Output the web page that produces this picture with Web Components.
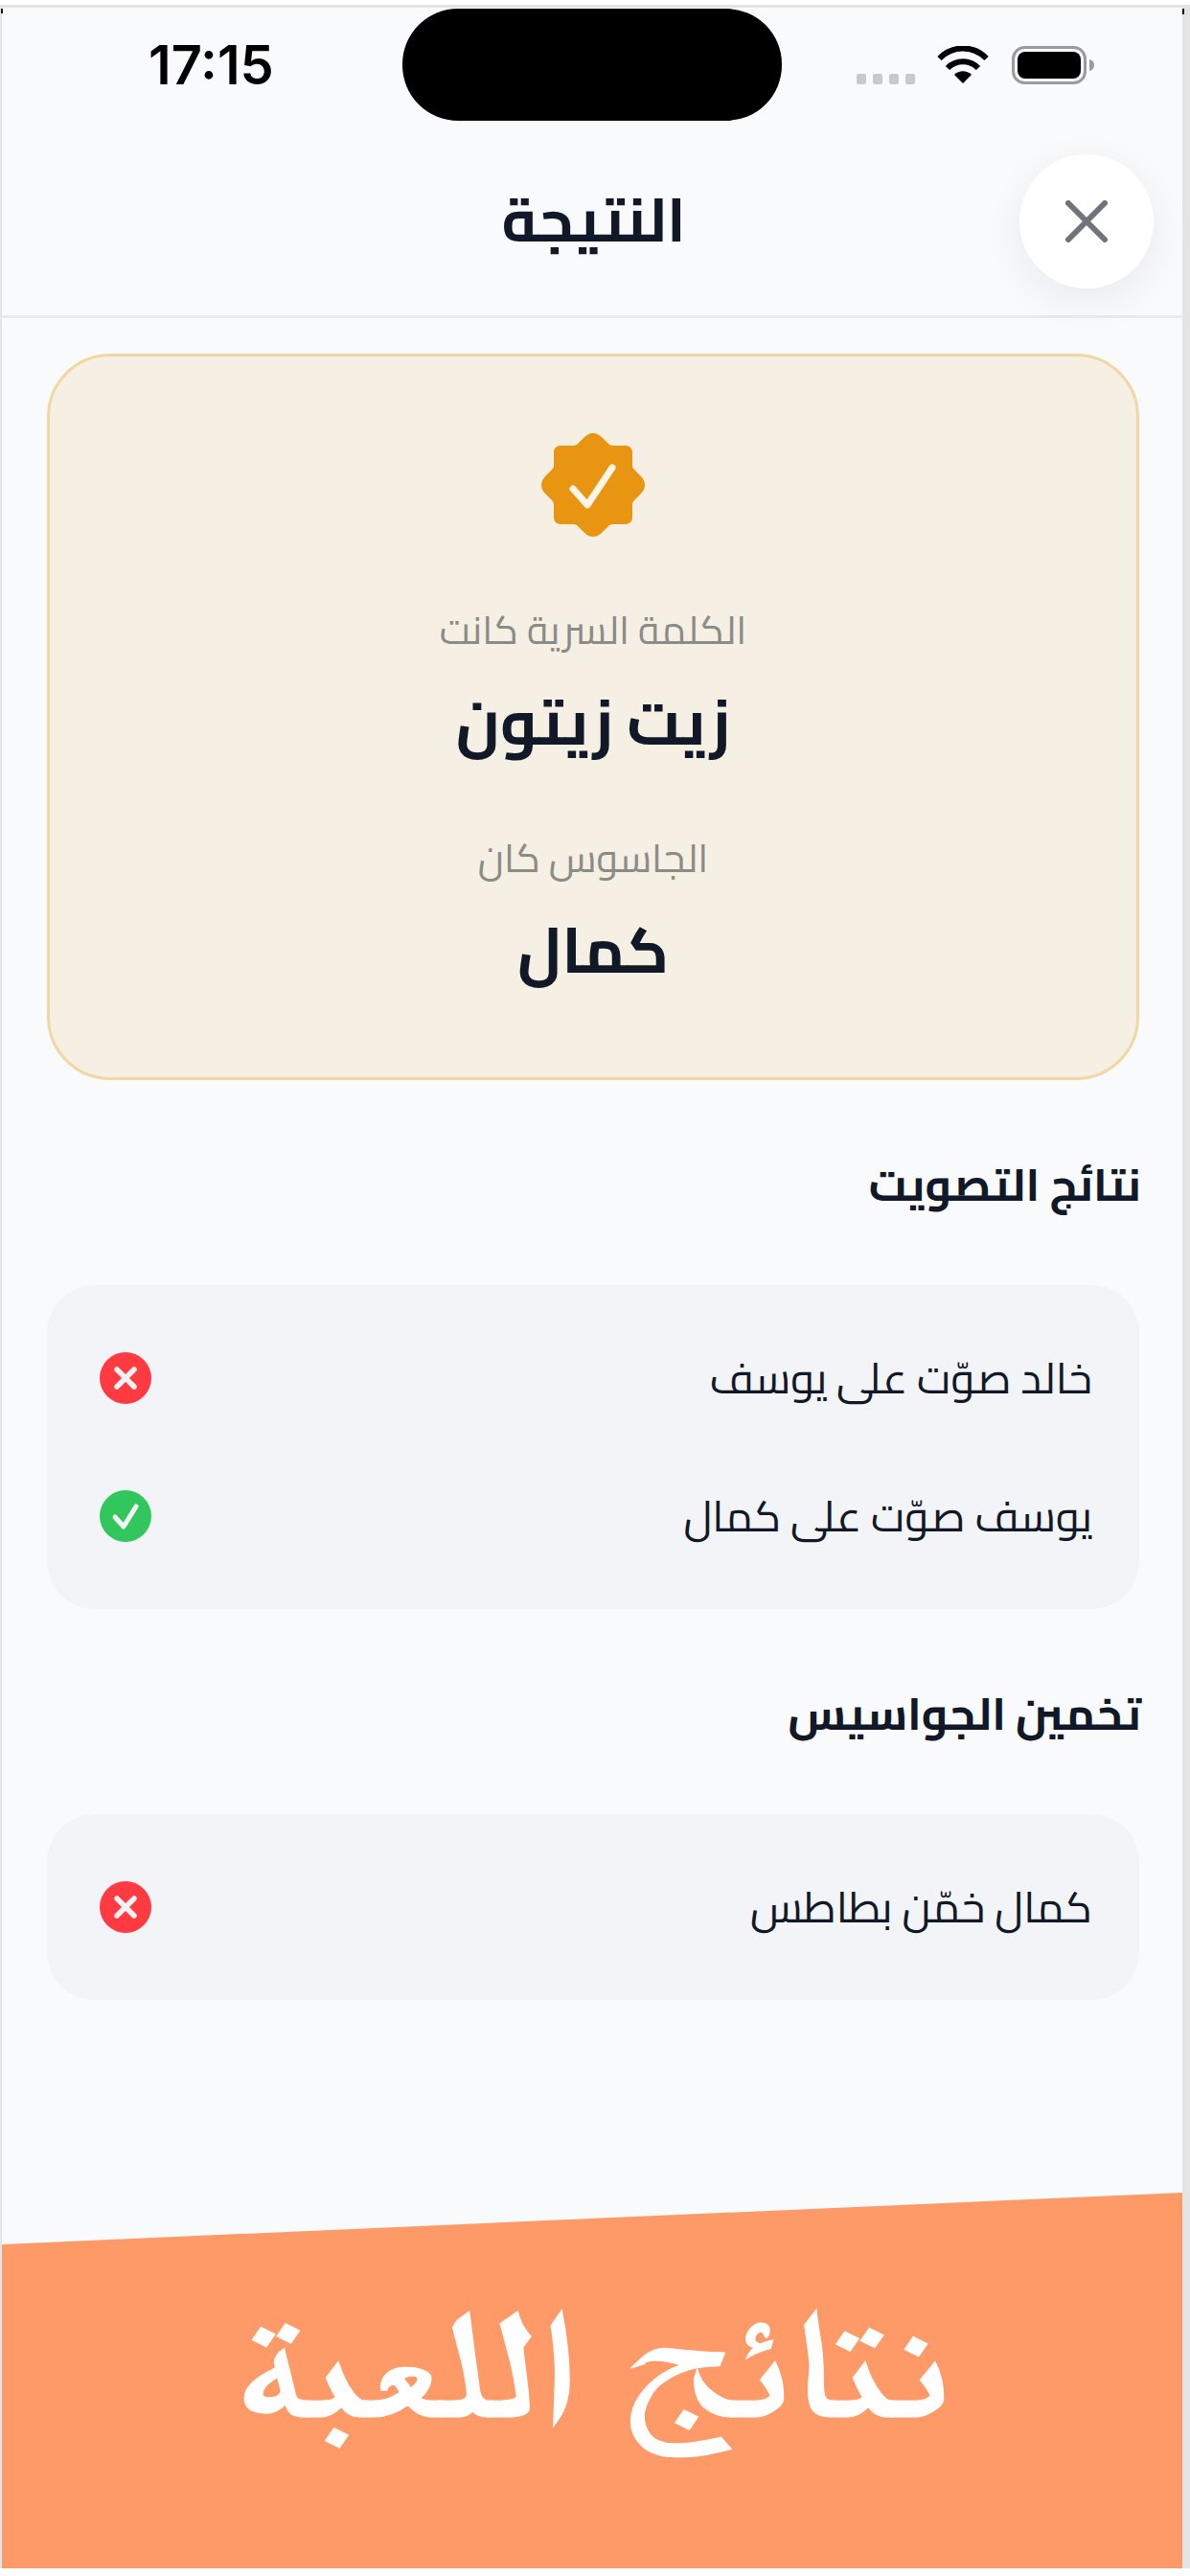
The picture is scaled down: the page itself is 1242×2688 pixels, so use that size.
<!DOCTYPE html>
<html lang="ar">
<head>
<meta charset="utf-8">
<title>النتيجة</title>
<style>
html, body { margin: 0; background: #fff; }
body { font-family: Cairo, "Noto Sans", sans-serif; color: #111827; }
</style>
</head>
<body>
<phone-frame>
    <status-bar time="17:15"></status-bar>
    <nav-header title="النتيجة"></nav-header>
    <results-view>
        <reveal-card>
            <reveal-item label="الكلمة السرية كانت" value="زيت زيتون"></reveal-item>
            <reveal-item label="الجاسوس كان" value="كمال"></reveal-item>
        </reveal-card>
        <result-section heading="نتائج التصويت">
            <result-row status="bad">خالد صوّت على يوسف</result-row>
            <result-row status="ok">يوسف صوّت على كمال</result-row>
        </result-section>
        <result-section heading="تخمين الجواسيس">
            <result-row status="bad">كمال خمّن بطاطس</result-row>
        </result-section>
    </results-view>
    <promo-banner>نتائج اللعبة</promo-banner>
</phone-frame>

<script>
const frameTemplate = document.createElement('template');
frameTemplate.innerHTML = `
<style>
:host {
    display: flex;
    flex-direction: column;
    box-sizing: border-box;
    position: relative;
    width: 1242px;
    height: 2675px;
    margin-top: 5px;
    border-top: 3px solid #e4e4e4;
    border-left: 2px solid #e2e5e9;
    border-right: 8px solid #e4e4e4;
    background: #f9fafc;
}
i {
    position: absolute;
    top: 1px;
    width: 2px;
    height: 5px;
    background: #111;
}
i.l { left: -1px; }
i.r { right: -2px; height: 6px; }
</style>
<i class="l"></i><i class="r"></i>
<slot></slot>
`;

class PhoneFrame extends HTMLElement {
    constructor() {
        super();
        this.attachShadow({mode: 'open'})
            .appendChild(frameTemplate.content.cloneNode(true));
    }
}

const statusTemplate = document.createElement('template');
statusTemplate.innerHTML = `
<style>
:host {
    display: grid;
    grid-template-columns: 418px 396px 1fr;
    align-items: center;
    height: 122px;
    box-sizing: border-box;
    padding: 1px 0 4px;
    direction: ltr;
}
.time {
    padding-left: 153px;
    font: 600 56px/1 Inter, "Liberation Sans", sans-serif;
    color: #000;
}
.island {
    height: 117px;
    border-radius: 58px;
    background: #000;
}
.icons {
    display: flex;
    align-items: center;
    padding-left: 78px;
}
.dots {
    display: flex;
    gap: 7px;
    align-self: flex-end;
    margin-right: 23px;
}
.dots b {
    width: 10px;
    height: 11px;
    border-radius: 2px;
    background: #c9c9c9;
}
svg { display: block; }
.wifi { margin-right: 24px; }
</style>
<div class="time"></div>
<div class="island"></div>
<div class="icons">
    <div class="dots"><b></b><b></b><b></b><b></b></div>
    <svg class="wifi" width="54" height="39" viewBox="0 0 54 39">
        <path d="M2.500 13C16-1 38-1 51.500 13M11 23C20 14 34 14 43 23" fill="none" stroke="#000" stroke-width="6"/>
        <path d="M18 30C23 25 31 25 36 30L27 39Z" fill="#000"/>
    </svg>
    <svg width="87" height="40" viewBox="0 0 87 40">
        <rect x="1.500" y="1.500" width="75" height="37" rx="12" fill="none" stroke="#9b9b9b" stroke-width="3"/>
        <rect x="6" y="6" width="66" height="28" rx="8" fill="#000"/>
        <path d="M81 14c3 .5 5 3 5 6s-2 5.500-5 6z" fill="#9b9b9b"/>
    </svg>
</div>
`;

class StatusBar extends HTMLElement {
    constructor() {
        super();
        this.attachShadow({mode: 'open'})
            .appendChild(statusTemplate.content.cloneNode(true));
    }

    connectedCallback() {
        this.shadowRoot.querySelector('.time').textContent = this.getAttribute('time');
    }
}

const navTemplate = document.createElement('template');
navTemplate.innerHTML = `
<style>
:host {
    display: grid;
    grid-template-columns: 170px 1fr 170px;
    align-items: center;
    height: 202px;
    box-sizing: border-box;
    border-bottom: 3px solid #e9eaed;
    direction: ltr;
}
h1 {
    grid-column: 2;
    margin: 0;
    padding-left: 3px;
    text-align: center;
    font: 700 63px/1.5 Cairo, sans-serif;
    color: #111827;
    direction: rtl;
}
button {
    grid-column: 3;
    justify-self: start;
    display: grid;
    place-items: center;
    width: 140px;
    height: 140px;
    margin-top: 3px;
    padding: 0;
    border: 0;
    border-radius: 50%;
    background: #fff;
    box-shadow: 0 12px 40px rgba(17, 24, 39, .07);
}
svg { display: block; }
</style>
<h1></h1>
<button aria-label="إغلاق">
    <svg width="44" height="44" viewBox="0 0 44 44">
        <path d="M3 3L41 41M41 3L3 41" fill="none" stroke="#6f737a" stroke-width="6" stroke-linecap="round"/>
    </svg>
</button>
`;

class NavHeader extends HTMLElement {
    constructor() {
        super();
        this.attachShadow({mode: 'open'})
            .appendChild(navTemplate.content.cloneNode(true));
    }

    connectedCallback() {
        this.shadowRoot.querySelector('h1').textContent = this.getAttribute('title');
    }
}

const viewTemplate = document.createElement('template');
viewTemplate.innerHTML = `
<style>
:host {
    display: flex;
    flex-direction: column;
    padding: 37px 45px 0 47px;
    direction: rtl;
}
</style>
<slot></slot>
`;

class ResultsView extends HTMLElement {
    constructor() {
        super();
        this.attachShadow({mode: 'open'})
            .appendChild(viewTemplate.content.cloneNode(true));
    }
}

const cardTemplate = document.createElement('template');
cardTemplate.innerHTML = `
<style>
:host {
    display: flex;
    flex-direction: column;
    align-items: center;
    box-sizing: border-box;
    height: 758px;
    padding-top: 80px;
    border: 3px solid #f1d7a3;
    border-radius: 66px;
    background: #f6f0e4;
}
svg { display: block; margin-bottom: 66px; }
::slotted(reveal-item) { margin-bottom: 57px; }
</style>
<svg width="108" height="108" viewBox="0 0 108 108">
    <path fill="#e89611" d="M54 0C58 0 61 2 64 5L70 11C71.500 12.500 73 13 75 13H88C92 13 95 16 95 20V33C95 35 95.500 36.500 97 38L103 44C106 47 108 50 108 54C108 58 106 61 103 64L97 70C95.500 71.500 95 73 95 75V88C95 92 92 95 88 95H75C73 95 71.500 95.500 70 97L64 103C61 106 58 108 54 108C50 108 47 106 44 103L38 97C36.500 95.500 35 95 33 95H20C16 95 13 92 13 88V75C13 73 12.500 71.500 11 70L5 64C2 61 0 58 0 54C0 50 2 47 5 44L11 38C12.500 36.500 13 35 13 33V20C13 16 16 13 20 13H33C35 13 36.500 12.500 38 11L44 5C47 2 50 0 54 0Z"/>
    <path d="M33 58L48 75L74 36" fill="none" stroke="#fdf6e8" stroke-width="7" stroke-linecap="round" stroke-linejoin="round"/>
</svg>
<slot></slot>
`;

class RevealCard extends HTMLElement {
    constructor() {
        super();
        this.attachShadow({mode: 'open'})
            .appendChild(cardTemplate.content.cloneNode(true));
    }
}

const itemTemplate = document.createElement('template');
itemTemplate.innerHTML = `
<style>
:host {
    display: flex;
    flex-direction: column;
    align-items: center;
    gap: 10px;
}
.label {
    font: 400 41px/63px Cairo, sans-serif;
    color: #8b8b88;
}
.value {
    font: 700 66px/108px Cairo, sans-serif;
    color: #111827;
}
</style>
<div class="label"></div>
<div class="value"></div>
`;

class RevealItem extends HTMLElement {
    constructor() {
        super();
        this.attachShadow({mode: 'open'})
            .appendChild(itemTemplate.content.cloneNode(true));
    }

    connectedCallback() {
        this.shadowRoot.querySelector('.label').textContent = this.getAttribute('label');
        this.shadowRoot.querySelector('.value').textContent = this.getAttribute('value');
    }
}

const sectionTemplate = document.createElement('template');
sectionTemplate.innerHTML = `
<style>
:host {
    display: block;
    margin-top: 64px;
}
h2 {
    margin: 0 -2px 60px 0;
    font: 700 47px/90px Cairo, sans-serif;
    color: #111827;
}
.list {
    box-sizing: border-box;
    padding: 25px 49px 25px 55px;
    border-radius: 50px;
    background: #f2f4f8;
}
</style>
<h2></h2>
<div class="list"><slot></slot></div>
`;

class ResultSection extends HTMLElement {
    constructor() {
        super();
        this.attachShadow({mode: 'open'})
            .appendChild(sectionTemplate.content.cloneNode(true));
    }

    connectedCallback() {
        this.shadowRoot.querySelector('h2').textContent = this.getAttribute('heading');
    }
}

const rowIcons = {
    bad: `<svg width="54" height="54" viewBox="0 0 54 54">
        <circle cx="27" cy="27" r="27" fill="#ff3b41"/>
        <path d="M18 18L36 36M36 18L18 36" fill="none" stroke="#f4f2f4" stroke-width="5.500" stroke-linecap="round"/>
    </svg>`,
    ok: `<svg width="54" height="54" viewBox="0 0 54 54">
        <circle cx="27" cy="27" r="27" fill="#31c75c"/>
        <path d="M16 28L25 38L38 17" fill="none" stroke="#f4f6f4" stroke-width="5" stroke-linecap="round" stroke-linejoin="round"/>
    </svg>`
};

const rowTemplate = document.createElement('template');
rowTemplate.innerHTML = `
<style>
:host {
    display: flex;
    align-items: center;
    justify-content: space-between;
    height: 144px;
    font: 400 45px/1.5 Cairo, sans-serif;
    color: #111827;
}
.icon svg { display: block; }
</style>
<span><slot></slot></span>
<span class="icon"></span>
`;

class ResultRow extends HTMLElement {
    constructor() {
        super();
        this.attachShadow({mode: 'open'})
            .appendChild(rowTemplate.content.cloneNode(true));
    }

    connectedCallback() {
        this.shadowRoot.querySelector('.icon').innerHTML = rowIcons[this.getAttribute('status')];
    }
}

const bannerTemplate = document.createElement('template');
bannerTemplate.innerHTML = `
<style>
:host {
    display: flex;
    align-items: center;
    justify-content: center;
    box-sizing: border-box;
    margin-top: auto;
    height: 392px;
    padding-bottom: 20px;
    background: #fe9a67;
    clip-path: polygon(0 54px, 100% 0, 100% 100%, 0 100%);
    direction: rtl;
    font: 700 160px/1 FreeSerif, "Noto Naskh Arabic", "Liberation Serif", serif;
    color: #fff;
}
span {
    display: inline-block;
    transform: scaleX(1.13);
    -webkit-text-stroke: 1px #fff;
}
</style>
<span><slot></slot></span>
`;

class PromoBanner extends HTMLElement {
    constructor() {
        super();
        this.attachShadow({mode: 'open'})
            .appendChild(bannerTemplate.content.cloneNode(true));
    }
}

customElements.define('phone-frame', PhoneFrame);
customElements.define('status-bar', StatusBar);
customElements.define('nav-header', NavHeader);
customElements.define('results-view', ResultsView);
customElements.define('reveal-card', RevealCard);
customElements.define('reveal-item', RevealItem);
customElements.define('result-section', ResultSection);
customElements.define('result-row', ResultRow);
customElements.define('promo-banner', PromoBanner);
</script>
</body>
</html>
